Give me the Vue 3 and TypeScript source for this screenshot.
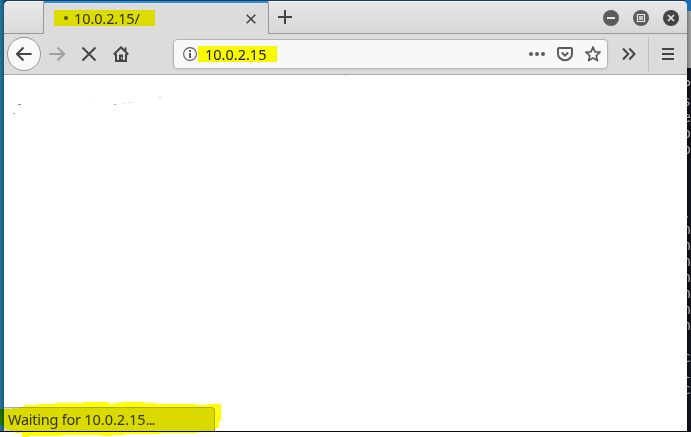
<script setup lang="ts">
const terminalRows: string[] = ['P', 's', 'e', 'o', 'o', '', '', '', '.', 'n', 'n', 'n', 'n', 'n', 'n', 'n', '', 'c', 'l', 'c']
const address = '10.0.2.15'
</script>

<template>
  <div class="page">
  <div class="desktop">
    <div class="terminal">
      <div class="terminal-title"></div>
      <div class="terminal-body">
        <div v-for="(row, i) in terminalRows" :key="i" class="row"><span>{{ row }}</span></div>
      </div>
    </div>
    <main class="window">
      <header class="tabs">
        <div class="before"></div>
        <div class="tab">
          <span class="title"><i class="dot"></i>{{ address }}/</span>
          <svg class="close" width="10" height="10" viewBox="0 0 10 10"><path d="M0.7 0.7l8.6 8.6M9.3 0.7L0.7 9.3" /></svg>
        </div>
        <div class="after">
          <svg class="plus" width="14" height="14" viewBox="0 0 14 14"><path d="M7 0v14M0 7h14" /></svg>
          <div class="controls">
            <svg width="16" height="16" viewBox="0 0 16 16"><circle cx="8" cy="8" r="8" fill="#5c5c5c" /><path d="M4 8h8" stroke="#e6e6e6" stroke-width="2" /></svg>
            <svg width="16" height="16" viewBox="0 0 16 16"><circle cx="8" cy="8" r="8" fill="#5c5c5c" /><path d="M4.5 4.5h7v7h-7z" stroke="#e6e6e6" stroke-width="1.2" /><path d="M6 6h4v4H6z" fill="#c4c4c4" /></svg>
            <svg width="16" height="16" viewBox="0 0 16 16"><circle cx="8" cy="8" r="8" fill="#444" /><path d="M5 5l6 6M11 5l-6 6" stroke="#e6e6e6" stroke-width="1.7" /></svg>
          </div>
        </div>
      </header>
      <nav class="toolbar">
        <div class="back"><svg width="16" height="16" viewBox="0 0 16 16"><path d="M15.6 8H1.2M7.5 1.5L1 8l6.5 6.5" /></svg></div>
        <svg class="forward" width="16" height="16" viewBox="0 0 16 16"><path d="M0.4 8h14.4M8.5 1.5L15 8l-6.5 6.5" /></svg>
        <svg class="stop" width="16" height="16" viewBox="0 0 16 16"><path d="M1.5 1.5l13 13M14.5 1.5l-13 13" /></svg>
        <svg class="home" width="16" height="16" viewBox="0 0 16 16"><path d="M0.8 8.5L8 1.3l7.2 7.2M3 8v7h10V8" /><path d="M11.5 1.5h2v4l-2-2zM6 8.5h4V15H6z" fill="#444" stroke="none" /><path d="M8 11h1v2H8z" fill="#ddd" stroke="none" /></svg>
        <div class="urlbar">
          <svg width="14" height="14" viewBox="0 0 14 14"><circle cx="7" cy="7" r="6.4" stroke-width="1.1" /><path d="M6 3h2v2H6zM6 6h2v5H6z" fill="#5b5b5b" stroke="none" /></svg>
          <span class="address">{{ address }}</span>
          <svg class="dots" width="16" height="16" viewBox="0 0 16 16"><g fill="#5b5b5b" stroke="none"><circle cx="2" cy="8" r="2" /><circle cx="8" cy="8" r="2" /><circle cx="14" cy="8" r="2" /></g></svg>
          <svg class="pocket" width="16" height="16" viewBox="0 0 16 16"><path d="M2 2h12q1 0 1 1v4.5a7 6.8 0 0 1-14 0V3q0-1 1-1zM4.8 6.5L8 9.6l3.2-3.1" /></svg>
          <svg class="star" width="16" height="16" viewBox="0 0 16 16"><path d="M8 1l2 4.8 5.1.4-3.9 3.4 1.2 5L8 12l-4.4 2.6 1.2-5L.9 6.2 6 5.8z" stroke-width="1.7" stroke-linejoin="round" /></svg>
        </div>
        <svg class="more" width="14" height="14" viewBox="0 0 14 14"><path d="M1 1.5L6.2 7 1 12.5M7.3 1.5L12.5 7l-5.2 5.5" /></svg>
        <div class="divider"></div>
        <svg class="menu" width="12" height="12" viewBox="0 0 12 12"><path d="M0 1h12M0 6h12M0 11h12" /></svg>
      </nav>
      <section class="content">
        <svg class="specks" width="400" height="44" viewBox="0 0 400 44">
          <path d="M14 29.5h3" stroke="#888" /><path d="M9 38.5h2" stroke="#aaa" />
          <path d="M89 28.5h1M124 27.5h5M154 22.5h4" stroke="#e3e3e3" /><path d="M110 29.5h2" stroke="#aaa" />
          <path d="M119 28.5h3M340 .5h3" stroke="#eee" />
        </svg>
        <div class="status"><span class="verb">Waiting for </span>{{ address }}<span class="ellipsis">...</span></div>
      </section>
    </main>
  </div>
    <svg class="marker" width="230" height="38" viewBox="0 0 230 38">
      <path d="M0 10H12V9H20V8H24V6H37V5H55V4H84V3H109V5H114V4H121V3H144V4H157V5H197V6H207V5H221V22H219V29H215V33H198V34H160V35H125V36H112V37H101V36H62V37H29V38H22V34H15V33H10V31H6V29H4V26H0z" />
    </svg>
  </div>
</template>

<style>
body { margin: 0; background: #fff; }
</style>

<style scoped>
* { box-sizing: border-box; }
svg { display: block; flex: none; fill: none; stroke: #444; stroke-width: 2; }
.page { position: relative; width: 691px; height: 437px; overflow: hidden; background: #fff; }
.desktop { position: relative; width: 691px; height: 432px; padding: 1px 4px 0; background: linear-gradient(90deg, #24779e 0, #165678 4px, #123c66 5px, #123c66 100%); border-bottom: 1px solid #0b0b10; font: 14.5px "Noto Sans", sans-serif; color: #1b1b1b; }
.terminal { position: absolute; top: 0; right: 0; width: 6px; height: 431px; overflow: hidden; background: #216bad; padding-top: 11px; }
.terminal-title { height: 57px; background: linear-gradient(90deg, #777 2px, #aaa 6px); }
.terminal-body { height: 363px; padding-top: 9px; background: linear-gradient(90deg, #08090d 2px, #171923 6px); }
.row { height: 16px; display: flex; justify-content: flex-end; color: #aaa; font: 14px/16px "DejaVu Sans Mono", monospace; }
.window { position: relative; width: 683px; height: 430px; display: flex; flex-direction: column; background: #fff; border-radius: 5px 5px 0 0; overflow: hidden; }
.tabs { display: flex; height: 33px; background: #dcdcdc; }
.before { width: 40px; border-right: 1px solid #999; border-bottom: 1px solid #999; border-top: 1px solid #f5f5f5; background: linear-gradient(#e9e9e9, #d9d9d9); }
.tab { width: 224px; display: flex; align-items: center; padding: 0 12px 0 10px; border-top: 2px solid #2793d3; background: #dcdcdc; }
.title { display: flex; align-items: center; width: 101px; height: 16px; margin-top: -1px; padding-left: 10px; background: #dddc00; color: #303000; white-space: nowrap; line-height: 16px; letter-spacing: -0.1px; }
.dot { width: 4px; height: 4px; margin-right: 6px; border-radius: 50%; background: #555500; }
.close { margin-left: auto; stroke-width: 1.6; }
.after { flex: 1; display: flex; align-items: center; padding: 0 8px 0 9px; border-left: 1px solid #999; border-bottom: 1px solid #999; border-top: 1px solid #f5f5f5; background: linear-gradient(#e7e7e7, #d7d7d7); }
.plus { margin-top: -1px; }
.controls { margin-left: auto; display: flex; gap: 14px; }
.controls svg { stroke: none; margin-top: 1px; }
.toolbar { display: flex; align-items: center; height: 41px; padding: 0 13px 1px 3px; background: #dcdcdc; border-bottom: 1px solid #aaa; }
.back { width: 34px; height: 34px; display: grid; place-items: center; border: 1px solid #999; border-radius: 50%; background: #f9f9f9; }
.forward { margin-left: 8px; stroke: #a0a0a0; }
.stop { margin-left: 16px; }
.home { margin-left: 16px; }
.urlbar { width: 435px; height: 30px; margin-left: 44px; padding: 0 6px 0 9px; display: flex; align-items: center; border: 1px solid #b4b4b4; border-radius: 4px; background: #f8f8f8; box-shadow: 0 1px 3px #0001; }
.urlbar svg { stroke: #5b5b5b; }
.address { width: 79px; height: 16px; margin-left: 1px; padding-left: 7px; line-height: 16px; background: #f9f900; }
.dots { margin-left: auto; }
.pocket { margin-left: 12px; }
.star { margin-left: 12px; }
.more { margin-left: 14px; }
.divider { width: 1px; height: 34px; margin-left: 12px; background: #bebebe; }
.menu { margin-left: auto; }
.content { flex: 1; display: flex; flex-direction: column; justify-content: space-between; }
.specks { stroke-width: 1; }
.status { width: 211px; height: 24px; padding-left: 4px; border-top: 1px solid #aaa; border-right: 1px solid #aaa; border-top-right-radius: 4px; background: #dadada; line-height: 23px; white-space: pre; color: #333; }
.verb { letter-spacing: -0.25px; }
.ellipsis { letter-spacing: -0.9px; }
.marker { position: absolute; left: 0; top: 399px; fill: #ff0; stroke: none; mix-blend-mode: multiply; }
</style>
